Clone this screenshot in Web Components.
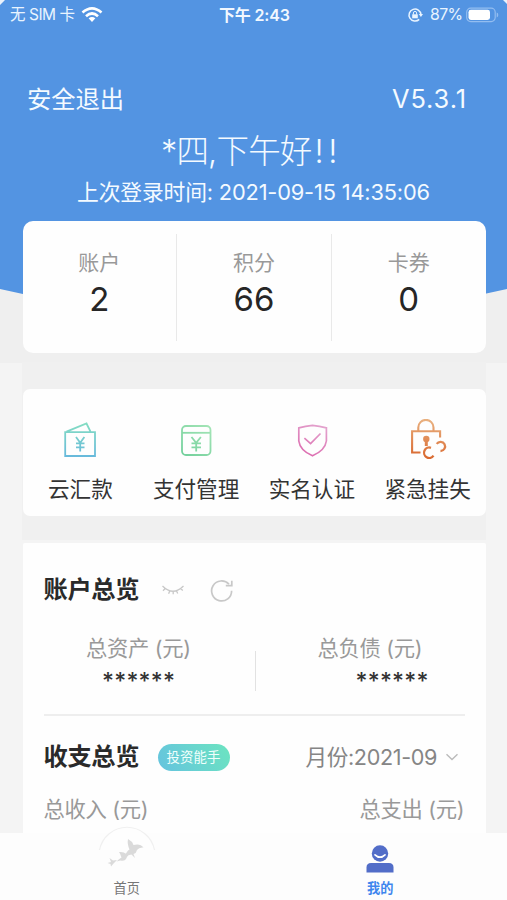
<!DOCTYPE html>
<html lang="zh-CN">
<head>
<meta charset="utf-8">
<title>我的</title>
<style>
html,body{margin:0;padding:0}
body{width:507px;height:900px;overflow:hidden;background:#fff;font-family:Inter,"Noto Sans CJK SC",sans-serif;color:#333}
</style>
</head>
<body>
<account-page></account-page>
<script>
const define = (name, html, setup) => customElements.define(name, class extends HTMLElement {
  connectedCallback() {
    if (this.shadowRoot) return;
    const root = this.attachShadow({ mode: 'open' });
    const t = document.createElement('template');
    t.innerHTML = typeof html === 'function' ? html(this) : html;
    root.append(t.content.cloneNode(true));
    if (setup) setup(this, root);
  }
});

// One line of text, tracked so that it fills the width in "w"; "s" is the font size.
define('line-text', `
<style>
:host{display:block;flex:none;white-space:nowrap;text-align:left}
span{display:inline-block;white-space:pre}
</style><span><slot></slot></span>`, (el, root) => {
  const size = +el.getAttribute('s'), w = +el.getAttribute('w');
  el.style.fontSize = size + 'px';
  el.style.lineHeight = (el.getAttribute('lh') || Math.round(size * 1.4)) + 'px';
  el.style.width = w + 'px';
  const natural = root.querySelector('span').getBoundingClientRect().width;
  el.style.letterSpacing = ((w - natural) / Math.max(1, [...el.textContent].length - 1)) + 'px';
});

define('status-bar', `
<style>
:host{display:grid;grid-template-columns:1fr auto 1fr;align-items:center;height:30px;padding:0 8px 0 10px;color:#e9f4ff}
div{display:flex;align-items:center}
.r{justify-content:flex-end}
.time{font-weight:600;color:#f2f8ff}
</style>
<div><line-text s="15.5" w="65">无 SIM 卡</line-text>
<svg width="22" height="16" viewBox="0 0 22 16" style="margin-left:6px" fill="none" stroke="#fff" stroke-width="2.7"><path d="M1.5 5.6Q11-2.7 20.5 5.6M5 9.2Q11 3.8 17 9.2"/><path d="M7.6 11.3Q11 8.5 14.4 11.3L11 14.9Z" fill="#fff" stroke="none"/></svg></div>
<line-text class="time" s="16" w="71">下午 2:43</line-text>
<div class="r">
<svg width="16" height="16" viewBox="0 0 16 16" fill="none" stroke="#e9f4ff" stroke-width="1.5"><path d="M12.2 12.4A6 6 0 1 1 14 7.5"/><path d="M11.8 7h4.2l-2.1 3z" fill="#e9f4ff" stroke="none"/><path d="M5.2 7.3h5.6v4H5.2z" fill="#e9f4ff" stroke="none"/><path d="M6.4 7.6V6a1.6 1.6 0 0 1 3.2 0v1.6" stroke-width="1"/></svg>
<line-text s="15.8" w="33" style="margin-left:7px">87%</line-text>
<svg width="33" height="16" viewBox="0 0 33 16" style="margin-left:3px"><rect x=".7" y="1.2" width="28.5" height="13.4" rx="4" fill="none" stroke="#93bdf0" stroke-width="1.2"/><rect x="2.5" y="2.8" width="21.5" height="10.2" rx="2.4" fill="#fff"/><path d="M30.7 5.6v4.8q1.6-.5 1.6-2.4t-1.6-2.4" fill="#93bdf0"/></svg>
</div>`);

define('page-header', el => `
<style>
:host{display:flex;flex-direction:column;color:#f4faff}
.top{display:flex;justify-content:space-between;align-items:center;height:34px;padding:52px 41px 0 27px}
.mid{display:flex;flex-direction:column;align-items:center}
.greet{font-weight:300;margin:13px 9px 0 0}
.greet b{font-weight:300;letter-spacing:4.5px;margin:0 -4px 0 3px}
</style>
<div class="top"><line-text s="24.3" w="97">安全退出</line-text><line-text s="25.4" w="74">V5.3.1</line-text></div>
<div class="mid"><line-text class="greet" s="32.5" w="176" lh="46">*${el.getAttribute('name')},下午好<b>!!</b></line-text>
<line-text s="21.8" w="353" lh="34">上次登录时间: ${el.getAttribute('last')}</line-text></div>`);

define('stat-item', el => `
<style>
:host{display:flex;flex:1;flex-direction:column;align-items:center;margin:13px 0 12px;padding-top:14px;box-sizing:border-box}
:host(:not(:last-child)){border-right:1.5px solid #e9e9e9}
.n{font-size:33px;line-height:44px;color:#262626}
line-text{color:#999}
</style><line-text s="21" w="42">${el.getAttribute('label')}</line-text><div class="n"><slot></slot></div>`);

define('quick-item', `
<style>
:host{display:flex;flex:1;flex-direction:column;align-items:center;padding-top:30px;font-size:21.6px;line-height:32px;color:#333}
.i{height:54px}
</style><div class="i"><slot name="icon"></slot></div><slot></slot>`);

define('white-card', `
<style>
:host{display:flex;flex:none;box-sizing:border-box;width:463px;margin:0 0 0 22px;background:#fefefe;border-radius:var(--r,7px)}
</style><slot></slot>`);

define('tab-item', `
<style>
:host{display:flex;flex:1;flex-direction:column;align-items:center;justify-content:flex-end;font-size:13.2px;line-height:20px;padding-bottom:2px;color:#777}
:host([active]){color:#3f86ee;font-weight:600}
</style><slot name="icon"></slot><slot></slot>`);

define('tab-bar', `
<style>:host{display:flex;height:67px;background:#fdfdfd}</style><slot></slot>`);

define('overview-panel', `
<style>
:host{display:flex;flex-direction:column;width:100%;padding:0 21px 0 21px;color:#999}
.row{display:flex;align-items:center}
.title{font-weight:600;color:#2a2a2a}
.head{height:82px;padding-top:6px;box-sizing:content-box}
.sums{height:83px;align-items:flex-start}
.sum{display:flex;flex-direction:column;align-items:center}
.stars{color:#333;font-weight:500;margin-top:3px}
.bar{width:1.5px;height:40px;background:#e2e2e2;margin-top:20px}
.rule{height:2px;background:#eee}
.badge{display:flex;justify-content:center;align-items:center;width:72px;height:27px;border-radius:14px;margin-left:18px;background:linear-gradient(60deg,#65c3df,#6ce4c0);color:#f0fffc}
.month{margin-left:auto;color:#858585}
.foot{justify-content:space-between;height:34px;margin-top:-6px}
</style>
<div class="row head"><line-text class="title" s="24.2" w="96">账户总览</line-text>
<svg width="24" height="14" viewBox="0 0 24 14" style="margin-left:21px" fill="none" stroke="#c8c8c8" stroke-width="1.3"><path d="M1.5 3Q12 13.5 22.5 3M4.2 5.5L2 7.7M8.7 8L7.6 10.8M12.2 8.3v3M15.5 7.8l1.2 2.8M19.6 5.6l2.2 2"/></svg>
<svg width="25" height="25" viewBox="0 0 25 25" style="margin-left:24px" fill="none" stroke="#c8c8c8" stroke-width="1.7"><path d="M22.6 12.7A10 10 0 1 1 20 6.2"/><path d="M22.8 2.8V7.7H16.8"/></svg></div>
<div class="row sums">
<div class="sum" style="padding-right:21px;width:190px"><line-text s="21.3" w="105" lh="30" style="margin-top:2px">总资产 (元)</line-text><line-text class="stars" s="23" w="73" lh="31">******</line-text></div>
<div class="bar"></div>
<div class="sum" style="width:208px"><line-text s="21.3" w="105" lh="30" style="margin:2px 0 0 20px">总负债 (元)</line-text><line-text class="stars" s="23" w="73" lh="31" style="margin-left:64px">******</line-text></div>
</div>
<div class="rule"></div>
<div class="row" style="height:82px"><line-text class="title" s="24.2" w="96">收支总览</line-text>
<div class="badge"><line-text s="13.4" w="54">投资能手</line-text></div>
<line-text class="month" s="21.6" w="132">月份:2021-09</line-text>
<svg width="14" height="10" viewBox="0 0 14 10" style="margin:0 6px 0 7px" fill="none" stroke="#bbb" stroke-width="1.4"><path d="M1.5 2.2L7 7.6l5.5-5.4"/></svg></div>
<div class="row foot"><line-text s="21.3" w="105">总收入 (元)</line-text><line-text s="21.3" w="105">总支出 (元)</line-text></div>`);

define('account-page', `
<style>
:host{display:flex;flex-direction:column;position:relative;width:507px;height:900px;overflow:hidden}
.bg{position:absolute;inset:0;z-index:-1}
main{display:flex;flex-direction:column;height:833px;overflow:hidden}
</style>
<svg class="bg" width="507" height="900"><rect width="507" height="900" fill="#f4f4f4"/><rect y="280" width="507" height="83" fill="#efefef"/><rect x="22" y="362" width="464" height="178" fill="#f0f0f0"/><path d="M0 0H507V289Q253 348 0 289Z" fill="#5394e2"/><path d="M0 0H5L0 5ZM503 0H507V4Z" fill="#e9f1fb"/></svg>
<main>
<status-bar></status-bar>
<page-header name="四" last="2021-09-15 14:35:06"></page-header>
<white-card style="--r:10px;height:131.5px;margin:12px 0 0 22.5px">
<stat-item label="账户">2</stat-item><stat-item label="积分">66</stat-item><stat-item label="卡券">0</stat-item>
</white-card>
<white-card style="height:127px;margin:36.5px 0 0 22.5px">
<quick-item><svg slot="icon" width="44" height="44" viewBox="0 0 44 44" fill="none" stroke="url(#a)" stroke-width="1.8"><defs><linearGradient id="a" gradientUnits="userSpaceOnUse" x1="22" y1="5" x2="22" y2="38"><stop stop-color="#83dcc3"/><stop offset="1" stop-color="#67b9dc"/></linearGradient></defs><path d="M7.2 13.2H37V37H7.2ZM8.5 12.7L28.5 4.5 32.5 12.7"/><path d="M18 18L22.2 23.8 26.4 18M22.2 23.8V32.5M18 24.4H26.5M18 28.4H26.5"/></svg>云汇款</quick-item>
<quick-item><svg slot="icon" width="44" height="44" viewBox="0 0 44 44" fill="none" stroke="url(#b)" stroke-width="1.8"><defs><linearGradient id="b" gradientUnits="userSpaceOnUse" x1="8" y1="38" x2="35" y2="8"><stop stop-color="#70cf9b"/><stop offset="1" stop-color="#a2e4b5"/></linearGradient></defs><rect x="8" y="7" width="28.5" height="29" rx="4"/><path d="M8 13.8H36.5"/><path d="M17.5 18L22.2 23.8 26.9 18M22.2 23.8V32.5M17.5 24.4H27M17.5 28.4H27"/></svg>支付管理</quick-item>
<quick-item><svg slot="icon" width="44" height="44" viewBox="0 0 44 44" fill="none" stroke="url(#c)" stroke-width="1.7"><defs><linearGradient id="c" gradientUnits="userSpaceOnUse" x1="30" y1="6" x2="15" y2="38"><stop stop-color="#e3a2cd"/><stop offset="1" stop-color="#dc69ae"/></linearGradient></defs><path d="M22.5 6.3Q29.5 7.2 36.4 8.8V22Q35 31.5 22.5 36.8 10 31.5 8.8 22V8.8Q15.5 7.2 22.5 6.3Z"/><path d="M14.4 19.2L20.6 24.6 30.5 14.5"/></svg>实名认证</quick-item>
<quick-item><svg slot="icon" width="44" height="44" viewBox="0 0 44 44" fill="none" stroke="url(#d)" stroke-width="2.1"><defs><linearGradient id="d" gradientUnits="userSpaceOnUse" x1="22" y1="2" x2="18" y2="40"><stop stop-color="#e9b07f"/><stop offset="1" stop-color="#d9682f"/></linearGradient></defs><g transform="translate(-1.5 -1)"><path d="M13.8 13V9.5a7.6 7.6 0 0 1 15.2 0V13M16 34.5H7.6V13.2H35.6V19.5"/><circle cx="21.8" cy="21" r="3.2" fill="url(#d)" stroke="none"/><path d="M21.8 22V28" stroke-width="3"/><path d="M26.5 29.8A5.2 5.2 0 1 0 29 37.7M32.2 25.8A4.6 4.6 0 1 1 36 33" stroke-width="2.3"/></g></svg>紧急挂失</quick-item>
</white-card>
<white-card style="height:290px;margin:27px 0 0 22.5px;--r:2px 2px 0 0"><overview-panel></overview-panel></white-card>
</main>
<tab-bar>
<tab-item><svg slot="icon" width="60" height="52" viewBox="0 0 60 52" style="margin-top:-10px"><path d="M2.5 24A28 28 0 0 1 57.5 24" fill="#fefefe" stroke="#f0f0f0" stroke-width="1.2"/><g fill="#dadada"><path d="M31 13Q35 15 36.5 19 43 17 46.5 21.5 42 21 40 24 39.5 27 36.5 28L38 32 34.5 28.5Q30 29 27.5 31.5 29.5 25 32.5 23.5 30 18 31 13Z"/><path d="M22 26Q27 25.5 28.5 27.5L32.5 27.5 30 31Q28 36 23.5 34.5L19.5 35.5Q22 33 24.5 31.5 23.5 28 22 26Z"/><path d="M12.5 32L16 34.5 20 34 17 37 14 40.5 13.5 38 10.5 37 14 36Z"/></g></svg>首页</tab-item>
<tab-item active><svg slot="icon" width="28" height="28" viewBox="0 0 28 28" style="margin-bottom:5px"><circle cx="14" cy="8.5" r="8.2" fill="#526dc8"/><path d="M9 9.8Q14 14.6 19 9.8" fill="none" stroke="#fff" stroke-width="1.7" stroke-linecap="round"/><path d="M.5 27.4V22.5Q.5 18 5 18H23Q27.5 18 27.5 22.5V27.4Z" fill="#526dc8"/></svg>我的</tab-item>
</tab-bar>`);
</script>
</body>
</html>
